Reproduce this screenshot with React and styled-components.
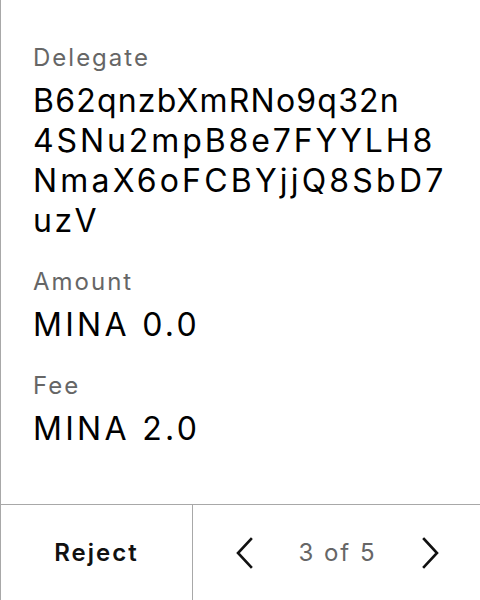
import React from 'react'
import styled, { createGlobalStyle } from 'styled-components'

const Global = createGlobalStyle`
  html, body { margin: 0; padding: 0; background: #fff; }
  body { font-family: Inter, "Noto Sans", sans-serif; }
`

// address as the device wraps it, with the tracking each line needs
const address = [
  { text: 'B62qnzbXmRNo9q32n', spacing: 1.2 },
  { text: '4SNu2mpB8e7FYYLH8', spacing: 2.9 },
  { text: 'NmaX6oFCBYjjQ8SbD7', spacing: 3.2 },
  { text: 'uzV', spacing: 2.5 },
]

function Chevron({ dir }) {
  return (
    <svg width="20" height="32" viewBox="0 0 20 32" fill="none">
      <path
        d={dir === 'left' ? 'M16 2 L3 16 L16 30' : 'M4 2 L17 16 L4 30'}
        stroke="#111"
        strokeWidth="2.6"
        strokeLinecap="square"
      />
    </svg>
  )
}

export default function App() {
  return (
    <>
      <Global />
      <Screen>
        <Details>
          <Field>
            <Label>Delegate</Label>
            <Value>
              {address.map((line) => (
                <Line key={line.text} $spacing={line.spacing}>{line.text}</Line>
              ))}
            </Value>
          </Field>
          <Field>
            <Label>Amount</Label>
            <Value>
              <Line $spacing={3.3}>MINA 0.0</Line>
            </Value>
          </Field>
          <Field>
            <Label>Fee</Label>
            <Value>
              <Line $spacing={3.3}>MINA 2.0</Line>
            </Value>
          </Field>
        </Details>
        <Footer>
          <RejectButton>Reject</RejectButton>
          <Pager>
            <NavButton><Chevron dir="left" /></NavButton>
            <PageText>3 of 5</PageText>
            <NavButton><Chevron dir="right" /></NavButton>
          </Pager>
        </Footer>
      </Screen>
    </>
  )
}

const Screen = styled.div`
  width: 480px;
  height: 600px;
  box-sizing: border-box;
  border-left: 1px solid #a8a8a8;
  display: flex;
  flex-direction: column;
`
const Details = styled.div`
  flex: 1;
  padding: 42px 32px 0 32px;
  display: flex;
  flex-direction: column;
  gap: 25px;
`
const Field = styled.div`
  display: flex;
  flex-direction: column;
  gap: 7px;
`
const Label = styled.div`
  font-size: 24px;
  line-height: 32px;
  letter-spacing: 2px;
  color: #666;
`
const Value = styled.div`
  font-size: 32px;
  line-height: 40px;
  color: #000;
`
const Line = styled.div`
  white-space: nowrap;
  letter-spacing: ${(p) => p.$spacing}px;
`
const Footer = styled.div`
  height: 95px;
  border-top: 1px solid #a8a8a8;
  display: flex;
`
const RejectButton = styled.div`
  width: 191px;
  border-right: 1px solid #a8a8a8;
  display: flex;
  align-items: center;
  justify-content: center;
  font-size: 24px;
  font-weight: 600;
  letter-spacing: 2px;
  color: #111;
`
const Pager = styled.div`
  flex: 1;
  display: flex;
  align-items: center;
  justify-content: space-between;
  padding: 0 40px 0 42px;
`
const NavButton = styled.div`
  display: flex;
  align-items: center;
`
const PageText = styled.div`
  font-size: 24px;
  letter-spacing: 2px;
  color: #666;
`
